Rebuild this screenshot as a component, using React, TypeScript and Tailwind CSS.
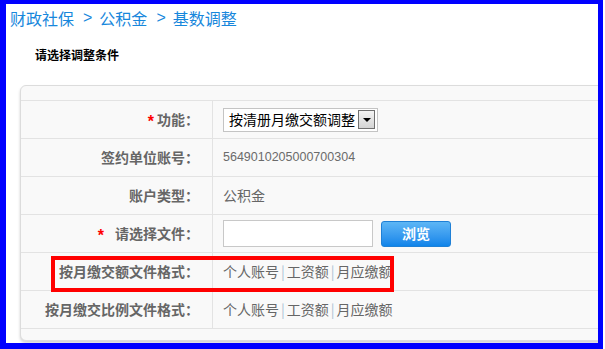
const cjk = "font-['Noto_Sans_CJK_SC','Noto_Sans',sans-serif]";

function Star({ gap }: { gap: string }) {
  return (
    <span className={`relative top-[2px] font-['Liberation_Sans',sans-serif] text-[16px] font-bold leading-none text-[#f00] ${gap}`}>
      *
    </span>
  );
}

function Row({ label, children }: { label: React.ReactNode; children: React.ReactNode }) {
  return (
    <div className="flex h-[38px] border-b border-[#e3e3e3]">
      <div className="flex w-[192px] shrink-0 items-center justify-end border-r border-[#e3e3e3] pr-[13px] text-[14px] font-bold text-[#666]">
        {label}
      </div>
      <div className="flex items-center pl-[10px] text-[14px] text-[#666]">{children}</div>
    </div>
  );
}

function Format() {
  return (
    <span className="flex items-center">
      个人账号<span className="mx-[2px] text-[#a9c2d4]">|</span>工资额
      <span className="mx-[2px] text-[#a9c2d4]">|</span>月应缴额
    </span>
  );
}

export default function App() {
  return (
    <div className={`relative h-[349px] w-[605px] bg-white ${cjk}`}>
      <div className="h-[349px] w-[603px] overflow-hidden border-solid border-[#0000ff] border-t-[4px] border-r-[5px] border-b-[6px] border-l-[6px]">
        <div className="mt-[2px] flex h-6 items-center pl-[4px] text-[16px] leading-6 text-[#1787dc]">
          <span>财政社保</span>
          <span className="ml-[9px] mr-[7px] font-['Liberation_Sans',sans-serif]">&gt;</span>
          <span>公积金</span>
          <span className="ml-[9px] mr-[7px] font-['Liberation_Sans',sans-serif]">&gt;</span>
          <span>基数调整</span>
        </div>
        <div className="mt-[15px] pl-[29px] text-[12px] font-bold leading-5 text-black">请选择调整条件</div>

        <div className="mt-[20px] ml-[14px] w-[600px] rounded-[6px] border border-[#dcdcdc] bg-[#f9f9f9] shadow-[0_2px_3px_rgba(0,0,0,0.18)]">
          <div className="h-[15px] border-b border-[#e3e3e3]" />
          <Row
            label={
              <>
                <Star gap="mr-[3px]" />
                功能：
              </>
            }
          >
            <div className="flex h-[24px] w-[155px] items-center justify-between border border-[#c4c4c4] bg-white pl-[5px] pr-[2px] text-black">
              <span>按清册月缴交额调整</span>
              <span className="flex h-[19px] w-[17px] items-center justify-center border border-[#707070] bg-gradient-to-b from-[#f4f4f4] to-[#d4d4d4]">
                <span className="h-0 w-0 border-x-[4px] border-t-[4px] border-x-transparent border-t-black" />
              </span>
            </div>
          </Row>
          <Row label="签约单位账号：">
            <span className="font-['Liberation_Sans',sans-serif] text-[12.5px] text-[#6b6b6b]">5649010205000700304</span>
          </Row>
          <Row label="账户类型：">公积金</Row>
          <Row
            label={
              <>
                <Star gap="mr-[11px]" />
                请选择文件：
              </>
            }
          >
            <div className="h-[27px] w-[150px] border border-[#c8c8c8] bg-white" />
            <button className="ml-[8px] flex h-[26px] w-[70px] items-center justify-center rounded-[3px] border border-[#1f80d6] bg-gradient-to-b from-[#5db6f5] to-[#0d84ea] text-[14px] font-bold text-white">
              浏览
            </button>
          </Row>
          <Row label="按月缴交额文件格式：">
            <Format />
          </Row>
          <Row label="按月缴交比例文件格式：">
            <Format />
          </Row>
          <div className="h-[11px]" />
        </div>
      </div>
      <div className="absolute left-[51px] top-[256px] h-[36px] w-[343px] border-[4px] border-[#f00]" />
    </div>
  );
}
